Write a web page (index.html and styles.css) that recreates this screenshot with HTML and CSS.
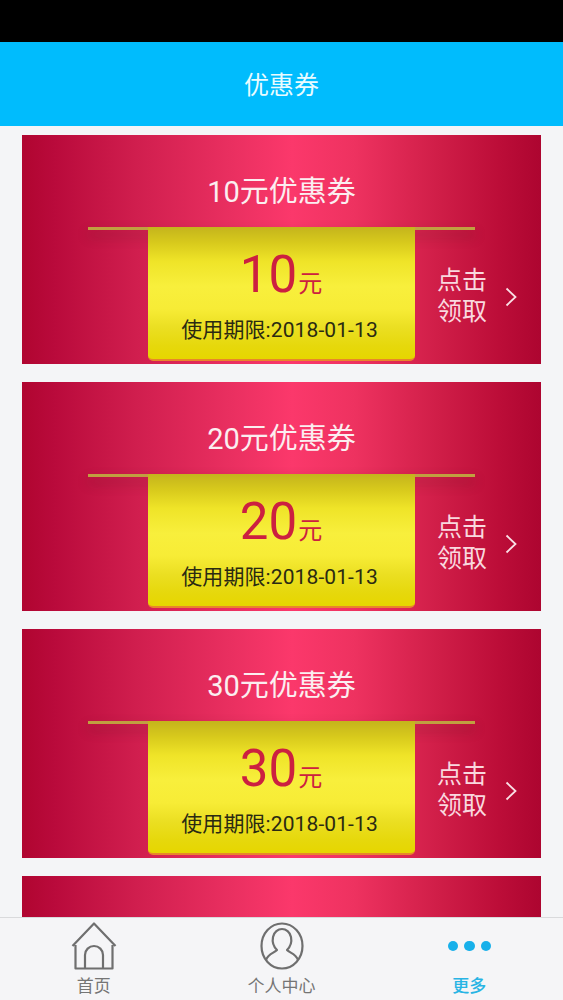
FILE: index.html
```html
<!DOCTYPE html>
<html lang="zh">
<head>
<meta charset="utf-8">
<title>优惠券</title>
<link rel="stylesheet" href="styles.css">
</head>
<body>
<div class="status"></div>
<header class="header">优惠券</header>
<main class="list">
  <section class="card">
    <h2 class="card-title">10元优惠券</h2>
    <div class="ribbon"></div>
    <div class="card-body">
      <div class="ticket">
        <div class="amount"><span class="num">10</span><span class="unit">元</span></div>
        <div class="expiry">使用期限:2018-01-13</div>
      </div>
      <div class="claim">
        <span class="claim-text">点击<br>领取</span>
        <svg class="chevron" viewBox="0 0 12 20"><path d="M1.5 1.5L10.5 10L1.5 18.5"/></svg>
      </div>
    </div>
  </section>
  <section class="card">
    <h2 class="card-title">20元优惠券</h2>
    <div class="ribbon"></div>
    <div class="card-body">
      <div class="ticket">
        <div class="amount"><span class="num">20</span><span class="unit">元</span></div>
        <div class="expiry">使用期限:2018-01-13</div>
      </div>
      <div class="claim">
        <span class="claim-text">点击<br>领取</span>
        <svg class="chevron" viewBox="0 0 12 20"><path d="M1.5 1.5L10.5 10L1.5 18.5"/></svg>
      </div>
    </div>
  </section>
  <section class="card">
    <h2 class="card-title">30元优惠券</h2>
    <div class="ribbon"></div>
    <div class="card-body">
      <div class="ticket">
        <div class="amount"><span class="num">30</span><span class="unit">元</span></div>
        <div class="expiry">使用期限:2018-01-13</div>
      </div>
      <div class="claim">
        <span class="claim-text">点击<br>领取</span>
        <svg class="chevron" viewBox="0 0 12 20"><path d="M1.5 1.5L10.5 10L1.5 18.5"/></svg>
      </div>
    </div>
  </section>
  <section class="card"></section>
</main>
<nav class="tabs">
  <div class="tab">
    <svg class="tab-icon" viewBox="0 0 46 48">
      <path d="M1.5 24L23 1.5L44.5 24M4.5 23V46.5H41.5V23M14 46.5V33A9 9 0 0 1 32 33V46.5"/>
    </svg>
    <span class="tab-label">首页</span>
  </div>
  <div class="tab">
    <svg class="tab-icon" viewBox="0 0 46 48">
      <ellipse cx="23" cy="24" rx="20.5" ry="22.5"/>
      <path d="M7 38C9 32 15 31 18 28C14 24 13 20 14 15C15 10 19 7 23 7C27 7 31 10 32 15C33 20 32 24 28 28C31 31 37 32 39 38"/>
    </svg>
    <span class="tab-label">个人中心</span>
  </div>
  <div class="tab tab-active">
    <div class="dots"><i class="dot"></i><i class="dot"></i><i class="dot"></i></div>
    <span class="tab-label">更多</span>
  </div>
</nav>
</body>
</html>
```
FILE: styles.css
```css
* { box-sizing: border-box; }
html, body { margin: 0; height: 100%; }
body {
  width: 563px;
  height: 1000px;
  overflow: hidden;
  display: flex;
  flex-direction: column;
  background: #f4f5f7;
  font-family: Roboto, "Noto Sans CJK SC", sans-serif;
}
.status { height: 42px; background: #000; flex: none; }
.header {
  height: 84px;
  flex: none;
  background: #00bcfd;
  color: #e9fbff;
  font-size: 25px;
  line-height: 88px;
  text-align: center;
}
.list {
  flex: 1;
  min-height: 0;
  overflow: hidden;
  padding: 9px 22px 0;
  display: flex;
  flex-direction: column;
  gap: 18px;
}
.card {
  flex: none;
  height: 229px;
  background: linear-gradient(90deg, #b00530 0%, #b90a3b 6%, #d01e4e 22%, #e92f60 40%, #fb386b 52%, #ee3260 64%, #d01e48 80%, #bc0d38 92%, #ad0530 100%);
  display: flex;
  flex-direction: column;
}
.card-title {
  margin: 0;
  height: 92px;
  flex: none;
  padding-top: 37px;
  color: #fbeef0;
  font-size: 29px;
  line-height: 40px;
  font-weight: 400;
  text-align: center;
}
.ribbon {
  height: 3px;
  flex: none;
  margin: 0 66px;
  background: #c0a040;
  box-shadow: 0 6px 12px rgba(70, 25, 25, .45);
}
.card-body {
  flex: 1;
  display: flex;
  padding-left: 126px;
}
.ticket {
  position: relative;
  width: 267px;
  height: 134px;
  margin-top: -3px;
  border-radius: 0 0 5px 5px;
  border-bottom: 2px solid #e8862a;
  background: linear-gradient(180deg, #c4b41c 0%, #d8ca1c 12%, #efe428 26%, #f8ef3c 45%, #f7ec36 62%, #ebdf22 76%, #e6d80c 90%, #e6d600 100%);
  text-align: center;
}
.amount {
  margin-top: 18px;
  height: 60px;
  line-height: 60px;
  color: #cc2040;
}
.num { font-size: 51px; }
.unit { font-size: 24px; margin-left: 1px; margin-right: 1px; }
.expiry {
  margin-top: 10px;
  margin-right: 4px;
  font-size: 21px;
  letter-spacing: .1px;
  line-height: 30px;
  color: #2a2a12;
}
.claim {
  flex: 1;
  display: flex;
  align-items: center;
  padding: 0 0 0 22px;
  height: 134px;
  margin-top: -3px;
}
.claim-text {
  font-size: 25px;
  line-height: 31px;
  color: #f9d8df;
  margin-top: 3px;
}
.chevron {
  width: 12px;
  height: 20px;
  margin-left: 18px;
  margin-top: 5px;
  fill: none;
  stroke: #f9e0e6;
  stroke-width: 1.8;
}
.tabs {
  position: relative;
  height: 83px;
  flex: none;
  background: #f5f5f7;
  border-top: 1px solid #d9dadc;
  display: flex;
}
.tab {
  flex: 1;
  display: flex;
  flex-direction: column;
  align-items: center;
  color: #757575;
}
.tab-icon {
  width: 46px;
  height: 48px;
  margin-top: 4px;
  fill: none;
  stroke: #6f6f6f;
  stroke-width: 2.2;
  stroke-linejoin: round;
}
.tab-label {
  margin-top: 4px;
  font-size: 17px;
  line-height: 24px;
}
.tab-active { color: #28b4e4; }
.dots {
  height: 48px;
  margin-top: 4px;
  display: flex;
  align-items: center;
  gap: 6px;
  margin-left: 1px;
}
.dot {
  width: 10.5px;
  height: 10.5px;
  border-radius: 50%;
  background: #18b0ea;
}
.tab-active .tab-label { font-weight: 500; }
```
